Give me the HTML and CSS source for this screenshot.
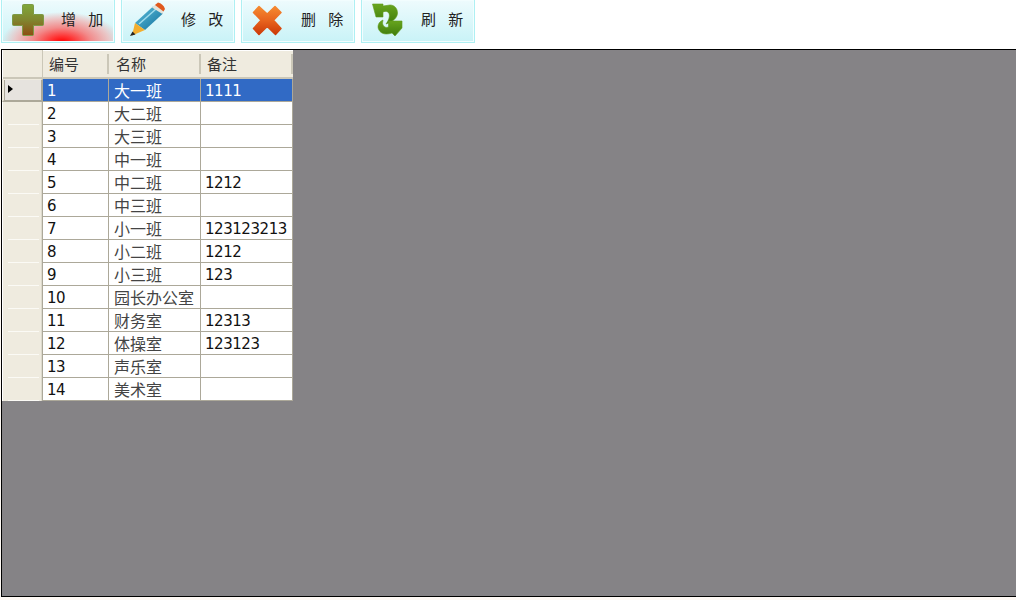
FILE: index.html
```html
<!DOCTYPE html>
<html lang="zh">
<head>
<meta charset="utf-8">
<title>班级</title>
<link rel="stylesheet" href="styles.css">
</head>
<body>
<div class="toolbar">
  <button class="tool tool-add">
    <svg class="icon" width="40" height="40" viewBox="0 0 40 40"><defs><linearGradient id="gp" x1="0" y1="0" x2="0" y2="1"><stop offset="0" stop-color="#7fa83a"/><stop offset=".5" stop-color="#80862f"/><stop offset="1" stop-color="#8e4d12"/></linearGradient></defs><path d="M15.500 4.500h9a1 1 0 0 1 1 1v9h9a1 1 0 0 1 1 1v9a1 1 0 0 1-1 1h-9v9a1 1 0 0 1-1 1h-9a1 1 0 0 1-1-1v-9h-9a1 1 0 0 1-1-1v-9a1 1 0 0 1 1-1h9v-9a1 1 0 0 1 1-1z" fill="url(#gp)" stroke="#7c9a45" stroke-width="1"/></svg>
    <span class="label">增 加</span>
  </button>
  <button class="tool">
    <svg class="icon" width="40" height="40" viewBox="0 0 40 40"><defs><linearGradient id="gb" x1="0" y1="0" x2="1" y2="1"><stop offset="0" stop-color="#5fc0dc"/><stop offset="1" stop-color="#106f9c"/></linearGradient></defs><path d="M7 23 25 6.500l10 7L17 30z" fill="url(#gb)"/><path d="M11 24 28 9" stroke="#9fdcec" stroke-width="1.500" fill="none"/><path d="M24 7.500 28 4l8 6-1.500 4z" fill="#e2e2da"/><path d="M27 5 30 2.500c3 .5 6 3 7 6.500l-1.500 2.500z" fill="#e0591e"/><path d="M7 23 17 30 4 35.500z" fill="#f3ae2e"/><path d="M4.500 31.500l3 3-5.500 1.500z" fill="#2a2520"/></svg>
    <span class="label">修 改</span>
  </button>
  <button class="tool">
    <svg class="icon" width="40" height="40" viewBox="0 0 40 40"><defs><linearGradient id="gx" x1="0" y1="0" x2="0" y2="1"><stop offset="0" stop-color="#f58a30"/><stop offset=".5" stop-color="#e8641e"/><stop offset="1" stop-color="#cc3a08"/></linearGradient></defs><path d="M19.200 14 L27 6.500 L33 12.500 L25.500 20.300 L33 28.500 L27.500 34.500 L19.200 26.500 L11 34.500 L5.500 28.500 L13 20.300 L5.500 12.500 L11 6.500 Z" fill="url(#gx)" stroke="url(#gx)" stroke-width="1.500" stroke-linejoin="round"/></svg>
    <span class="label">删 除</span>
  </button>
  <button class="tool">
    <svg class="icon" width="40" height="40" viewBox="0 0 40 40"><defs><linearGradient id="gr" x1="0" y1="0" x2="0" y2="1"><stop offset="0" stop-color="#69a61f"/><stop offset="1" stop-color="#3f7c0c"/></linearGradient></defs><path d="M4.500 4 15 4 15 6 22 5C27 5 29.500 9 29.500 13 29.500 17 26 21.500 18 24 21 20 22 16 21 13.500 20 11 17 11 15 12L15 17 8 17Z" fill="url(#gr)" stroke="#5f9a1c" stroke-width=".6"/><path d="M15 20C10 22 9 27 11 30 13 34 18 35 24 33L27 36 34 28 34 21 20.500 21 20.500 27C18 28 16 27 15 25 14 23 15 21 15 20Z" fill="url(#gr)" stroke="#5f9a1c" stroke-width=".6"/></svg>
    <span class="label">刷 新</span>
  </button>
</div>
<div class="workspace">
  <div class="grid">
    <div class="row head">
      <div class="rh"></div>
      <div class="c c1"><span>编号</span></div>
      <div class="c c2"><span>名称</span></div>
      <div class="c c3"><span>备注</span></div>
    </div>
    <div class="row sel"><div class="rh"><i class="arrow"></i></div><div class="c c1">1</div><div class="c c2">大一班</div><div class="c c3">1111</div></div>
    <div class="row"><div class="rh"></div><div class="c c1">2</div><div class="c c2">大二班</div><div class="c c3"></div></div>
    <div class="row"><div class="rh"></div><div class="c c1">3</div><div class="c c2">大三班</div><div class="c c3"></div></div>
    <div class="row"><div class="rh"></div><div class="c c1">4</div><div class="c c2">中一班</div><div class="c c3"></div></div>
    <div class="row"><div class="rh"></div><div class="c c1">5</div><div class="c c2">中二班</div><div class="c c3">1212</div></div>
    <div class="row"><div class="rh"></div><div class="c c1">6</div><div class="c c2">中三班</div><div class="c c3"></div></div>
    <div class="row"><div class="rh"></div><div class="c c1">7</div><div class="c c2">小一班</div><div class="c c3">123123213</div></div>
    <div class="row"><div class="rh"></div><div class="c c1">8</div><div class="c c2">小二班</div><div class="c c3">1212</div></div>
    <div class="row"><div class="rh"></div><div class="c c1">9</div><div class="c c2">小三班</div><div class="c c3">123</div></div>
    <div class="row"><div class="rh"></div><div class="c c1">10</div><div class="c c2">园长办公室</div><div class="c c3"></div></div>
    <div class="row"><div class="rh"></div><div class="c c1">11</div><div class="c c2">财务室</div><div class="c c3">12313</div></div>
    <div class="row"><div class="rh"></div><div class="c c1">12</div><div class="c c2">体操室</div><div class="c c3">123123</div></div>
    <div class="row"><div class="rh"></div><div class="c c1">13</div><div class="c c2">声乐室</div><div class="c c3"></div></div>
    <div class="row"><div class="rh"></div><div class="c c1">14</div><div class="c c2">美术室</div><div class="c c3"></div></div>
  </div>
</div>
</body>
</html>
```
FILE: styles.css
```css
html, body {
  margin: 0;
  padding: 0;
  height: 600px;
  overflow: hidden;
  background: #fffaf5;
  font-family: "DejaVu Sans", "Noto Sans CJK SC", sans-serif;
}
.toolbar {
  height: 49px;
  background: #fff;
  display: flex;
  gap: 6px;
  padding-left: 1px;
  box-sizing: border-box;
  align-items: flex-start;
}
.tool {
  width: 114px;
  height: 43px;
  box-sizing: border-box;
  border: 1px solid #aef0f3;
  border-top: 0;
  box-shadow: inset 0 0 0 1px #f2fdfe;
  padding: 0 0 0 6px;
  margin: 0;
  display: flex;
  align-items: flex-start;
  background: linear-gradient(#eefbfd, #c9f3f7);
  font: inherit;
}
.tool-add {
  background:
    radial-gradient(ellipse 60px 30px at 60px 42px, #ff0000 0, #ff3030 18%, #f28a8a 48%, rgba(238,190,190,.85) 78%, rgba(240,210,210,0) 100%),
    linear-gradient(#eefbfd, #c9f3f7);
}
.icon {
  flex: none;
  display: block;
}
.label {
  margin-left: 13px;
  margin-top: 9px;
  font-family: "Noto Sans CJK SC", sans-serif;
  font-size: 15px;
  line-height: 20px;
  color: #222;
  white-space: pre;
  word-spacing: 9px;
}
.workspace {
  height: 548px;
  margin-left: 1px;
  box-sizing: border-box;
  background: #858386;
  border: 1px solid #000;
  border-right: 0;
}
.grid {
  width: 291px;
  display: flex;
  flex-direction: column;
  background: #aca899;
}
.row {
  display: flex;
  height: 23px;
  flex: none;
  background: #fff;
}
.head {
  height: 29px;
  background: #efebdf;
  box-shadow: inset 0 1px 0 #fff, inset 0 -2px 0 #cbc7b8;
}
.rh {
  width: 41px;
  flex: none;
  box-sizing: border-box;
  background: #efebdf;
  border-left: 1px solid #fff;
  border-right: 1px solid #aca899;
  box-shadow: inset -1px 0 0 #dcd9cc;
  position: relative;
}
.rh::after {
  content: "";
  position: absolute;
  left: 5px;
  right: 3px;
  bottom: 0;
  height: 1px;
  background: #fbfaf5;
}
.head .rh {
  border-right: 1px solid #cbc7b8;
  box-shadow: inset 0 -2px 0 #cbc7b8;
}
.head .rh::after,
.sel .rh::after {
  content: none;
}
.sel .rh {
  background: #e6e3de;
  border: 2px solid #aca899;
  border-left: 2px solid #efebdf;
  border-top: 1px solid #efebdf;
  box-shadow: inset 1px 0 0 #aca899;
}
.arrow {
  position: absolute;
  left: 4px;
  top: 5px;
  width: 0;
  height: 0;
  border-left: 5px solid #000;
  border-top: 4.5px solid transparent;
  border-bottom: 4.5px solid transparent;
}
.c {
  box-sizing: border-box;
  flex: none;
  height: 23px;
  border-right: 1px solid #aca899;
  border-bottom: 1px solid #aca899;
  padding-left: 4px;
  font-size: 15px;
  letter-spacing: -.45px;
  line-height: 24px;
  color: #111;
  white-space: nowrap;
}
.c1 { width: 66px; }
.c2 {
  width: 92px;
  padding-left: 5px;
  font-family: "Noto Sans CJK SC", sans-serif;
  font-size: 16px;
  letter-spacing: 0;
  line-height: 23px;
  color: #444;
}
.c3 { width: 92px; }
.sel .c {
  background: #316ac5;
  color: #fff;
}
.head .c {
  height: 29px;
  border: 0;
  position: relative;
  padding: 0;
  color: #333;
  font-family: "Noto Sans CJK SC", sans-serif;
  font-size: 15px;
  line-height: 27px;
  letter-spacing: 0;
}
.head .c::after {
  content: "";
  position: absolute;
  right: 0;
  top: 4px;
  height: 20px;
  border-right: 2px solid #cbc7b8;
}
.head .c span { margin-left: 6px; }
.head .c2 span { margin-left: 7px; }
```
